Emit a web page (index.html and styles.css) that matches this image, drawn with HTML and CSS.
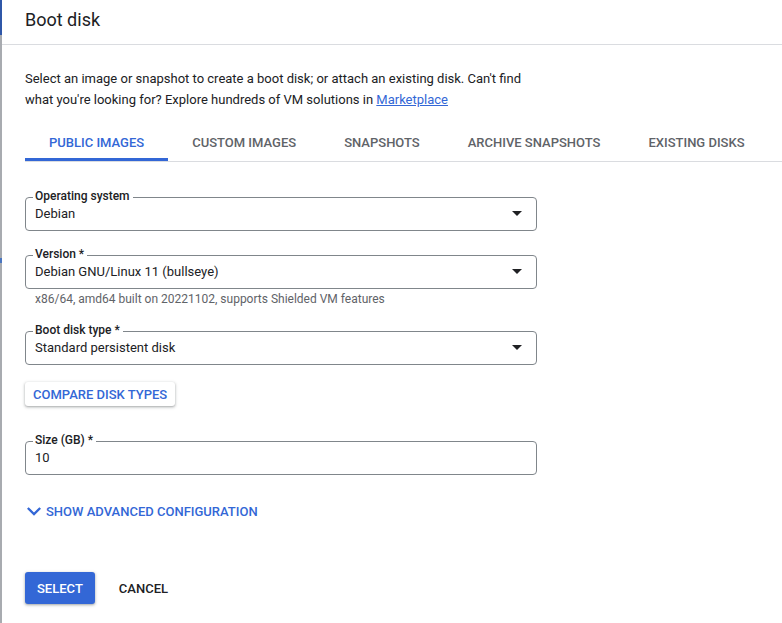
FILE: index.html
```html
<!DOCTYPE html>
<html lang="en">
<head>
<meta charset="utf-8">
<title>Boot disk</title>
<link rel="stylesheet" href="styles.css">
</head>
<body>
<div class="page">
  <div class="edge"><div class="edge-top"></div><div class="edge-mark"></div></div>
  <div class="panel">
    <header class="header"><h1 class="title">Boot disk</h1></header>
    <main class="content">
      <p class="intro">Select an image or snapshot to create a boot disk; or attach an existing disk. Can't find what you're looking for? Explore hundreds of VM solutions in <a class="link" href="#">Marketplace</a></p>
      <nav class="tabs">
        <div class="tab active">Public images</div>
        <div class="tab">Custom images</div>
        <div class="tab">Snapshots</div>
        <div class="tab">Archive snapshots</div>
        <div class="tab">Existing disks</div>
      </nav>

      <div class="form">
        <div class="field">
          <div class="box">
            <span class="label">Operating system</span>
            <span class="value">Debian</span>
            <svg class="caret" width="10" height="5" viewBox="0 0 10 5"><path d="M0 0h10L5 5z" fill="#202124"/></svg>
          </div>
        </div>

        <div class="field">
          <div class="box">
            <span class="label">Version *</span>
            <span class="value">Debian GNU/Linux 11 (bullseye)</span>
            <svg class="caret" width="10" height="5" viewBox="0 0 10 5"><path d="M0 0h10L5 5z" fill="#202124"/></svg>
          </div>
          <div class="hint">x86/64, amd64 built on 20221102, supports Shielded VM features</div>
        </div>

        <div class="field field-type">
          <div class="box">
            <span class="label">Boot disk type *</span>
            <span class="value">Standard persistent disk</span>
            <svg class="caret" width="10" height="5" viewBox="0 0 10 5"><path d="M0 0h10L5 5z" fill="#202124"/></svg>
          </div>
        </div>

        <div class="compare-row"><button class="btn-raised">Compare disk types</button></div>

        <div class="field field-size">
          <div class="box">
            <span class="label">Size (GB) *</span>
            <span class="value">10</span>
          </div>
        </div>

        <div class="advanced">
          <svg class="chev" width="14" height="9" viewBox="6 8.59 12 7.41"><path d="M7.41 8.59L12 13.17l4.59-4.58L18 10l-6 6-6-6 1.41-1.41z" fill="#3367d6"/></svg>
          <span>Show advanced configuration</span>
        </div>
      </div>

      <div class="actions">
        <button class="btn-primary">Select</button>
        <button class="btn-text">Cancel</button>
      </div>
    </main>
  </div>
</div>
</body>
</html>
```

FILE: styles.css
```css
* { box-sizing: border-box; }
html, body { margin: 0; padding: 0; background: #fff; }
body {
  font-family: Roboto, "Liberation Sans", Arial, sans-serif;
  color: #202124;
  width: 782px;
  height: 623px;
  overflow: hidden;
}
.page { display: flex; height: 623px; }
.edge {
  width: 2px;
  flex: 0 0 2px;
  background: #a8abb0;
  display: flex;
  flex-direction: column;
}
.edge-top { height: 35px; background: #2f57a8; }
.edge-mark { height: 5px; margin-top: 223px; background: #4a76c0; }
.panel { flex: 1; display: flex; flex-direction: column; }
.header {
  height: 45px;
  border-bottom: 1px solid #dadce0;
  padding-left: 23px;
  display: flex;
  align-items: center;
}
.title {
  margin: 0;
  font-size: 18px;
  font-weight: 400;
  color: #202124;
  position: relative;
  top: -3px;
}
.content { padding: 0 0 0 23px; }
.intro {
  margin: 23px 0 0;
  font-size: 13px;
  line-height: 21px;
  color: #202124;
  width: 510px;
}
.link { color: #3367d6; text-decoration: underline; }
.tabs {
  display: flex;
  margin-top: 13px;
  border-bottom: 1px solid #dadce0;
}
.tab {
  height: 38px;
  padding: 3px 24px 0;
  display: flex;
  align-items: center;
  font-size: 13px;
  font-weight: 500;
  text-transform: uppercase;
  color: #5f6368;
  border-bottom: 3px solid transparent;
}
.tab.active { color: #3367d6; border-bottom-color: #3367d6; }
.form { width: 512px; margin-top: 35px; display: flex; flex-direction: column; }
.field { margin-bottom: 24px; }
.field-type { margin-bottom: 17px; }
.box {
  position: relative;
  height: 34px;
  border: 1px solid #80868b;
  border-radius: 4px;
  display: flex;
  align-items: center;
  padding: 0 14px 1px 9px;
}
.label {
  position: absolute;
  left: 7px;
  top: -9px;
  background: #fff;
  padding: 0 3px 0 2px;
  font-size: 12px;
  line-height: 14px;
  font-weight: 500;
  color: #202124;
}
.value { flex: 1; font-size: 13px; color: #202124; }
.caret { flex: 0 0 10px; }
.hint {
  font-size: 12px;
  color: #5f6368;
  padding: 2px 0 0 10px;
  line-height: 16px;
}
.compare-row { display: flex; margin-bottom: 35px; }
.btn-raised {
  font-family: inherit;
  height: 24px;
  padding: 0 8px;
  border: none;
  border-radius: 3px;
  background: #fff;
  box-shadow: 0 1px 2px rgba(60,64,67,0.3), 0 1px 3px 1px rgba(60,64,67,0.15);
  color: #3367d6;
  font-size: 13px;
  font-weight: 500;
  text-transform: uppercase;
}
.field-size { margin-bottom: 27px; }
.advanced {
  display: flex;
  align-items: center;
  gap: 5px;
  padding-left: 2px;
  font-size: 13px;
  font-weight: 500;
  color: #3367d6;
  text-transform: uppercase;
  height: 18px;
}
.actions { display: flex; gap: 12px; margin-top: 52px; }
.btn-primary, .btn-text {
  font-family: inherit;
  height: 32px;
  padding: 0 12px;
  border: none;
  border-radius: 3px;
  font-size: 13px;
  font-weight: 500;
  text-transform: uppercase;
}
.btn-primary {
  background: #3367d6;
  color: #fff;
  box-shadow: 0 1px 2px rgba(60,64,67,0.3), 0 1px 3px 1px rgba(60,64,67,0.15);
}
.btn-text { background: transparent; color: #202124; }
```
